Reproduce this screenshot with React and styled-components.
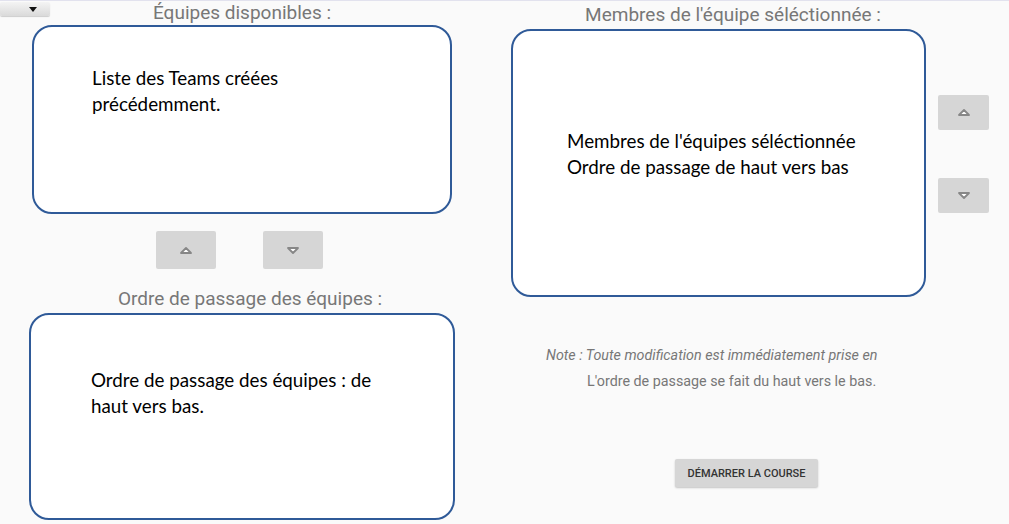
import React from "react";
import styled, { createGlobalStyle } from "styled-components";

const Global = createGlobalStyle`
  html, body { margin: 0; padding: 0; background: #fafafa; }
  body { font-family: Roboto, "Liberation Sans", sans-serif; }
`;

const Page = styled.div`
  width: 1009px;
  height: 524px;
  box-sizing: border-box;
  border-top: 1px solid #e2e2ee;
  background: #fafafa;
  display: grid;
  grid-template-columns: 484px 525px;
  overflow: hidden;
`;

const LeftCol = styled.div`
  display: flex;
  flex-direction: column;
  align-items: center;
`;

const Header = styled.div`
  width: 100%;
  height: 24px;
  display: grid;
  grid-template-columns: 1fr auto 1fr;
  align-items: start;
`;

const Dropdown = styled.button`
  justify-self: start;
  margin-top: 1px;
  width: 50px;
  height: 14px;
  padding: 0 13px 0 0;
  border: none;
  border-radius: 2px;
  background: linear-gradient(#f4f4f4, #dadada);
  box-shadow: 0 1px 1px rgba(0, 0, 0, 0.18);
  display: flex;
  align-items: center;
  justify-content: flex-end;
`;

const Title = styled.div`
  font-family: Roboto, "Liberation Sans", sans-serif;
  font-size: 19px;
  line-height: 24px;
  color: #777;
  white-space: nowrap;
  margin-top: ${(p) => p.$mt || 0}px;
  margin-left: ${(p) => p.$ml || 0}px;
  text-align: center;
  width: ${(p) => (p.$w ? `${p.$w}px` : "auto")};
`;

const Box = styled.div`
  box-sizing: border-box;
  width: ${(p) => p.$w}px;
  height: ${(p) => p.$h}px;
  margin-top: ${(p) => p.$mt || 0}px;
  flex-shrink: 0;
  background: #fff;
  border: 2px solid #2f5a98;
  border-radius: 20px;
  padding: ${(p) => p.$pt}px 0 0 ${(p) => p.$pl}px;
  font-family: Lato, "Open Sans", sans-serif;
  font-size: 18.8px;
  line-height: 26px;
  color: #000;
  white-space: nowrap;
`;

const ArrowRow = styled.div`
  display: flex;
  gap: 47px;
  margin-top: 17px;
  margin-right: 6px;
`;

const ArrowButton = styled.button`
  width: ${(p) => p.$w}px;
  height: ${(p) => p.$h}px;
  padding: 0;
  border: none;
  border-radius: 2px;
  background: #d6d6d6;
  display: flex;
  align-items: center;
  justify-content: center;
`;

const RightCol = styled.div`
  display: flex;
  flex-direction: column;
`;

const MembersRow = styled.div`
  display: flex;
  margin-top: 2px;
  margin-left: 27px;
`;

const SideButtons = styled.div`
  display: flex;
  flex-direction: column;
  gap: 48px;
  padding-top: 66px;
  margin-left: 12px;
`;

const Notes = styled.div`
  margin-top: 45px;
  font-family: Roboto, "Liberation Sans", sans-serif;
  font-size: 14.3px;
  line-height: 26px;
  color: #777;
`;

const NoteLine = styled.div`
  padding-left: ${(p) => p.$pl}px;
  font-style: ${(p) => (p.$italic ? "italic" : "normal")};
  white-space: nowrap;
`;

const StartButton = styled.button`
  margin-top: 65px;
  margin-left: 191px;
  width: 143px;
  height: 28px;
  padding: 0;
  border: none;
  border-radius: 2px;
  background: #d6d6d6;
  box-shadow: 0 1px 2px rgba(0, 0, 0, 0.22);
  font-family: Roboto, "Liberation Sans", sans-serif;
  font-weight: 500;
  font-size: 11px;
  color: #333;
`;

const Up = () => (
  <svg width="14" height="9" viewBox="0 0 14 9">
    <polygon points="2,7 7,2 12,7" fill="#fff" stroke="#878787" strokeWidth="1.8" strokeLinejoin="round" />
  </svg>
);

const Down = () => (
  <svg width="14" height="9" viewBox="0 0 14 9">
    <polygon points="2,2 7,7 12,2" fill="#fff" stroke="#878787" strokeWidth="1.8" strokeLinejoin="round" />
  </svg>
);

const Caret = () => (
  <svg width="8" height="5" viewBox="0 0 8 5">
    <polygon points="0,0 8,0 4,5" fill="#111" />
  </svg>
);

export default function App() {
  return (
    <>
      <Global />
      <Page>
        <LeftCol>
          <Header>
            <Dropdown aria-label="menu">
              <Caret />
            </Dropdown>
            <Title>Équipes disponibles :</Title>
            <span />
          </Header>
          <Box $w={420} $h={189} $pt={38} $pl={58}>
            Liste des Teams créées
            <br />
            précédemment.
          </Box>
          <ArrowRow>
            <ArrowButton $w={60} $h={38} aria-label="monter">
              <Up />
            </ArrowButton>
            <ArrowButton $w={60} $h={38} aria-label="descendre">
              <Down />
            </ArrowButton>
          </ArrowRow>
          <Title $mt={18} $ml={16}>Ordre de passage des équipes :</Title>
          <Box $w={426} $h={207} $mt={2} $pt={52} $pl={60}>
            Ordre de passage des équipes : de
            <br />
            haut vers bas.
          </Box>
        </LeftCol>
        <RightCol>
          <Title $mt={2} $w={498}>
            Membres de l'équipe séléctionnée :
          </Title>
          <MembersRow>
            <Box $w={415} $h={268} $pt={97} $pl={54}>
              Membres de l'équipes séléctionnée
              <br />
              Ordre de passage de haut vers bas
            </Box>
            <SideButtons>
              <ArrowButton $w={51} $h={35} aria-label="monter">
                <Up />
              </ArrowButton>
              <ArrowButton $w={51} $h={35} aria-label="descendre">
                <Down />
              </ArrowButton>
            </SideButtons>
          </MembersRow>
          <Notes>
            <NoteLine $pl={62} $italic>
              Note : Toute modification est immédiatement prise en
            </NoteLine>
            <NoteLine $pl={103}>L'ordre de passage se fait du haut vers le bas.</NoteLine>
          </Notes>
          <StartButton>DÉMARRER LA COURSE</StartButton>
        </RightCol>
      </Page>
    </>
  );
}
